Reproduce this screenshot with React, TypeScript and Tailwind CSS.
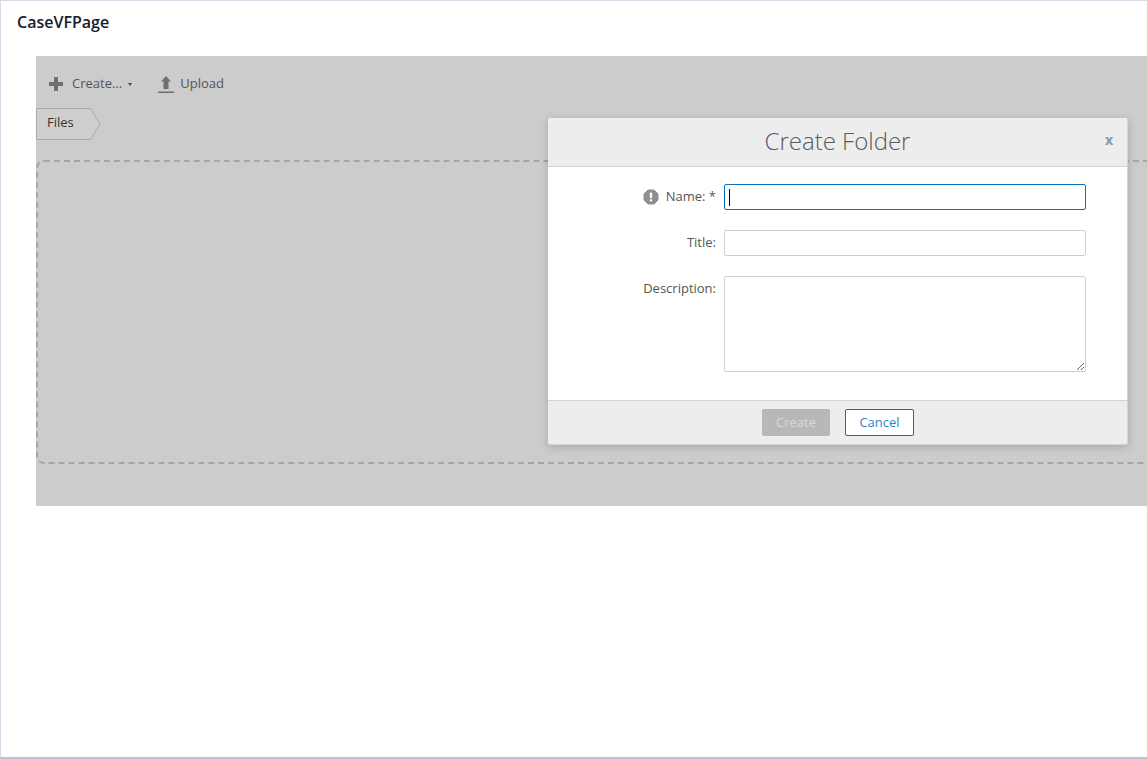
import React from 'react'

function PlusIcon() {
  return (
    <svg width="14" height="14" viewBox="0 0 14 14" className="block">
      <path d="M5 0h4v5h5v4H9v5H5V9H0V5h5z" fill="#6f6f6f" />
    </svg>
  )
}

function UploadIcon() {
  return (
    <svg width="16" height="18" viewBox="0 0 16 18" className="block">
      <path d="M8 1l5 5.500H10.500V14h-5V6.500H3z" fill="#6f6f6f" />
      <path d="M0 16.500h16V18H0z" fill="#6f6f6f" />
    </svg>
  )
}

function FilesCrumb() {
  return (
    <div className="relative w-[65px] h-[32px] flex items-center pl-[11px] pb-[2px] text-[13px] text-[#333]">
      <svg width="65" height="32" viewBox="0 0 65 32" className="absolute left-0 top-0">
        <path d="M0.500 0.500H54.500L64 16L54.500 31.500H0.500Z" fill="#cfcfcf" stroke="#a9a9a9" />
      </svg>
      <span className="relative">Files</span>
    </div>
  )
}

function Field({ label, children, className }: { label: React.ReactNode; children: React.ReactNode; className?: string }) {
  return (
    <div className={'flex ' + (className || '')}>
      <div className="w-[176px] flex justify-end items-start pt-[2px] pr-[8px] text-[13px] leading-[20px] text-[#555]">{label}</div>
      {children}
    </div>
  )
}

function CreateFolderDialog() {
  return (
    <div className="absolute left-[547px] top-[117px] w-[580px] h-[327px] flex flex-col bg-white rounded-[3px] border-r border-b border-[#d4d4d4] shadow-[0_2px_10px_rgba(0,0,0,0.18)] overflow-hidden">
      <div className="relative h-[49px] shrink-0 bg-[#ededed] border-b border-[#d2d2d2] flex items-start justify-center">
        <h2 className="text-[24px] font-light text-[#5a5a5a] leading-[46px]">Create Folder</h2>
        <span className="absolute right-[14px] top-[14px] text-[14px] leading-[16px] font-bold text-[#8497ad]">x</span>
      </div>
      <div className="flex-1 pt-[17px] flex flex-col">
        <Field label={
          <span className="flex items-center">
            <svg width="16" height="16" viewBox="0 0 16 16" className="mr-[7px] mt-[2px]">
              <path d="M5 1h6l4 4v6l-4 4H5l-4-4V5z" fill="#8f8f8f" stroke="#8f8f8f" strokeLinejoin="round" />
              <rect x="6.800" y="3.500" width="2.400" height="5.800" rx="0.800" fill="#fff" />
              <rect x="6.800" y="10.300" width="2.400" height="2.300" rx="0.800" fill="#fff" />
            </svg>
            Name: *
          </span>
        }>
          <div className="relative">
            <input readOnly className="block w-[362px] h-[26px] bg-white border border-[#0f71b5] rounded-[2px] outline-none" />
            <span className="absolute left-[5px] top-[5px] w-px h-[17px] bg-black" />
          </div>
        </Field>
        <Field label="Title:" className="mt-[20px]">
          <input readOnly className="block w-[362px] h-[26px] bg-white border border-[#cfcfcf] rounded-[2px] outline-none" />
        </Field>
        <Field label="Description:" className="mt-[20px]">
          <textarea readOnly className="block w-[362px] h-[96px] bg-white border border-[#cfcfcf] rounded-[2px] outline-none resize" />
        </Field>
      </div>
      <div className="h-[44px] shrink-0 bg-[#ededed] border-t border-[#d2d2d2] flex items-start pt-[8px] pl-[214px] text-[13px]">
        <button className="w-[68px] h-[27px] rounded-[2px] bg-[#b8b8b8] text-[#d8d8d8]">Create</button>
        <button className="ml-[15px] w-[69px] h-[27px] rounded-[2px] bg-white border border-[#0f71b5] text-[#2a86c5]">Cancel</button>
      </div>
    </div>
  )
}

export default function App() {
  return (
    <div className="relative w-[1147px] h-[759px] overflow-hidden bg-white border-l border-t border-b-2 border-l-[#d5dbe6] border-t-[#d5dbe6] border-b-[#b9c1d3] font-['Open_Sans',sans-serif]">
      <div className="pl-[16px] h-[55px] pt-[11px] text-[16px] leading-[20px] font-semibold text-[#16202c]">CaseVFPage</div>
      <div className="ml-[35px] h-[450px] bg-[#cccccc] overflow-hidden">
        <div className="flex items-center h-[52px] pt-[4px] pl-[13px] text-[13px] text-[#555]">
          <PlusIcon />
          <span className="ml-[9px]">Create...</span>
          <span className="ml-[6px] w-0 h-0 border-x-[2.500px] border-x-transparent border-t-[3px] border-t-[#444]" />
          <div className="ml-[26px]"><UploadIcon /></div>
          <span className="ml-[6px]">Upload</span>
        </div>
        <FilesCrumb />
        <div className="mt-[20px] w-[1160px] h-[304px] border-2 border-dashed border-[#a6a6a6] rounded-[8px]" />
      </div>
      <CreateFolderDialog />
    </div>
  )
}
